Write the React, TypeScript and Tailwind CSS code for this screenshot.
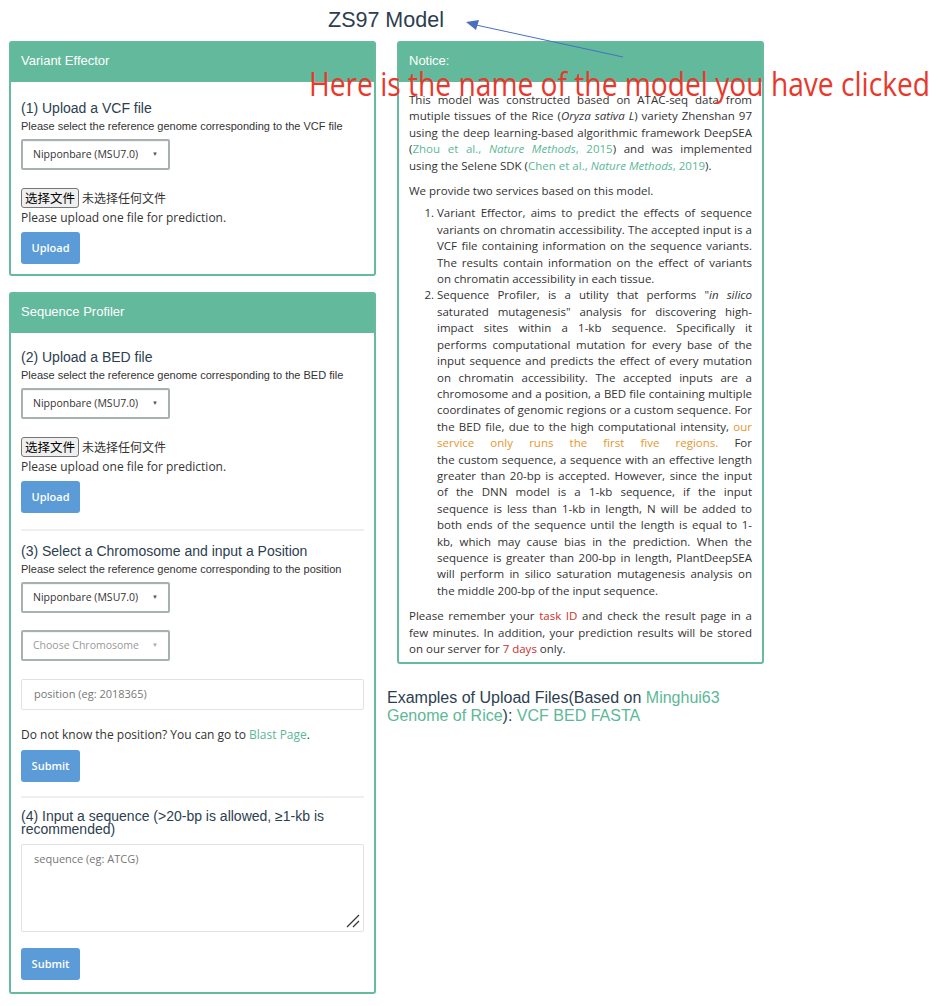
import React from "react";

const sans = "font-['Liberation_Sans',Arial,sans-serif]";
const open = "font-['Open_Sans',sans-serif]";
const cjk = "font-['Noto_Sans_CJK_SC',sans-serif]";

const Panel = ({ title, children, className = "" }: { title: string; children: React.ReactNode; className?: string }) => (
  <div className={`border-2 border-[#66bb9d] rounded-[3px] bg-white ${className}`}>
    <div className={`h-[39px] bg-[#63b99c] px-[10px] pb-[3px] flex items-center text-white text-[13px] ${sans}`}>{title}</div>
    {children}
  </div>
);

const Select = ({ label, muted = false }: { label: string; muted?: boolean }) => (
  <div className="w-[149px] h-[31px] border-2 border-[#a9b0b0] rounded-[2px] bg-white flex items-center justify-between pl-[10px] pr-[10px] shadow-[inset_0_1px_1px_rgba(0,0,0,0.05)]">
    <span className={`text-[10.5px] ${open} ${muted ? "text-[#999]" : "text-[#333]"}`}>{label}</span>
    <span className={`text-[6px] ${muted ? "text-[#aaa]" : "text-[#555]"}`}>▼</span>
  </div>
);

const FileRow = () => (
  <div className="flex items-center h-[20px]">
    <div className={`h-[20px] px-[3px] border border-[#767676] rounded-[3px] bg-[#efefef] flex items-center text-[12.5px] text-black ${cjk}`}>选择文件</div>
    <span className={`ml-[3px] text-[12px] text-[#333] ${cjk}`}>未选择任何文件</span>
  </div>
);

const Btn = ({ label }: { label: string }) => (
  <div className={`w-[59px] h-[32px] rounded-[3px] bg-[#5b9bd7] text-white text-[11px] font-semibold flex items-center justify-center ${open}`}>{label}</div>
);

const Heading = ({ children }: { children: React.ReactNode }) => (
  <div className={`text-[14px] leading-[14px] text-[#2c3e50] ${sans}`}>{children}</div>
);

const Sub = ({ children }: { children: React.ReactNode }) => (
  <div className={`mt-[5px] text-[11px] leading-[13px] text-[#333] ${sans}`}>{children}</div>
);

const Hr = () => <div className="h-[2px] bg-[#eef0f0]" />;

const green = "text-[#5cb896]";
// a full justified line, used where the reference breaks the line differently
const fullLine = "inline-block w-full [text-align-last:justify]";

export default function App() {
  return (
    <div className="relative w-[942px] h-[1006px] bg-white overflow-hidden">
      <div className={`pl-[328px] pt-[7px] h-[41px] text-[21.5px] leading-[26px] text-[#2c3e50] ${sans}`}>ZS97 Model</div>

      <div className="flex">
        {/* left column */}
        <div className="ml-[9px] w-[367px]">
          <Panel title="Variant Effector">
            <div className="px-[10px] pt-[19px] pb-[10px]">
              <Heading>(1) Upload a VCF file</Heading>
              <Sub>Please select the reference genome corresponding to the VCF file</Sub>
              <div className="mt-[6px]"><Select label="Nipponbare (MSU7.0)" /></div>
              <div className="mt-[18px]"><FileRow /></div>
              <div className={`mt-[1px] text-[12px] leading-[17px] text-[#333] ${open}`}>Please upload one file for prediction.</div>
              <div className="mt-[6px]"><Btn label="Upload" /></div>
            </div>
          </Panel>

          <Panel title="Sequence Profiler" className="mt-[16px]">
            <div className="px-[10px] pt-[17px] pb-[12px]">
              <Heading>(2) Upload a BED file</Heading>
              <Sub>Please select the reference genome corresponding to the BED file</Sub>
              <div className="mt-[6px]"><Select label="Nipponbare (MSU7.0)" /></div>
              <div className="mt-[18px]"><FileRow /></div>
              <div className={`mt-[1px] text-[12px] leading-[17px] text-[#333] ${open}`}>Please upload one file for prediction.</div>
              <div className="mt-[6px]"><Btn label="Upload" /></div>
              <div className="mt-[16px]"><Hr /></div>

              <div className="mt-[13px]"><Heading>(3) Select a Chromosome and input a Position</Heading></div>
              <Sub>Please select the reference genome corresponding to the position</Sub>
              <div className="mt-[6px]"><Select label="Nipponbare (MSU7.0)" /></div>
              <div className="mt-[17px]"><Select label="Choose Chromosome" muted /></div>
              <div className={`mt-[18px] h-[31px] border border-[#dfe3e3] rounded-[2px] flex items-center pl-[12px] text-[11px] text-[#777] ${open}`}>position (eg: 2018365)</div>
              <div className={`mt-[16px] text-[12px] leading-[17px] text-[#333] ${open}`}>
                Do not know the position? You can go to <span className={green}>Blast Page</span>.
              </div>
              <div className="mt-[7px]"><Btn label="Submit" /></div>
              <div className="mt-[14px]"><Hr /></div>

              <div className={`mt-[12px] text-[14px] leading-[13px] text-[#2c3e50] ${sans}`}>
                (4) Input a sequence (&gt;20-bp is allowed, ≥1-kb is recommended)
              </div>
              <div className={`relative mt-[8px] h-[88px] border border-[#dfe3e3] rounded-[2px] pl-[12px] pt-[6px] text-[11px] text-[#777] ${open}`}>
                sequence (eg: ATCG)
                <svg className="absolute right-[2px] bottom-[2px]" width="16" height="16" viewBox="0 0 16 16">
                  <path d="M14 2 L2 14 M14 8 L8 14" stroke="#333" strokeWidth="1.2" />
                </svg>
              </div>
              <div className="mt-[16px]"><Btn label="Submit" /></div>
            </div>
          </Panel>
        </div>

        {/* right column */}
        <div className="ml-[11px] w-[377px]">
          <Panel title="Notice:" className="ml-[10px] w-[367px]">
            <div className={`px-[10px] pt-[10px] pb-[5px] text-[11.5px] leading-[16.4px] text-[#333] text-justify ${open}`}>
              <p className="mb-[9px]">
                This model was constructed based on ATAC-seq data from mutiple tissues of the Rice (<i>Oryza sativa L</i>) variety Zhenshan 97 using the deep learning-based algorithmic framework DeepSEA{" "}
                <span className={fullLine}>(<span className={green}>Zhou et al., <i>Nature Methods</i>, 2015</span>) and was implemented</span>{" "}
                using the Selene SDK (<span className={green}>Chen et al., <i>Nature Methods</i>, 2019</span>).
              </p>
              <p className="mb-[6px]">We provide two services based on this model.</p>
              <ol className="list-decimal pl-[28px] mb-[9px]">
                <li>
                  Variant Effector, aims to predict the effects of sequence variants on chromatin accessibility. The accepted input is a VCF file containing information on the sequence variants. The results contain information on the effect of variants on chromatin accessibility in each tissue.
                </li>
                <li>
                  Sequence Profiler, is a utility that performs "<i>in silico</i> saturated mutagenesis" analysis for discovering high-impact sites within a 1-kb sequence. Specifically it performs computational mutation for every base of the input sequence and predicts the effect of every mutation on chromatin accessibility. The accepted inputs are a chromosome and a position, a BED file containing multiple coordinates of genomic regions or a custom sequence. For the BED file, due to the high computational intensity, <span className="text-[#e8962e]">our</span>{" "}
                  <span className={fullLine}><span className="text-[#e8962e]">service only runs the first five regions.</span> For</span>{" "}
                  the custom sequence, a sequence with an effective length greater than 20-bp is accepted. However, since the input of the DNN model is a 1-kb sequence, if the input sequence is less than 1-kb in length, N will be added to{" "}
                  <span className={fullLine}>both ends of the sequence until the length is equal to 1-</span>
                  kb, which may cause bias in the prediction. When the sequence is greater than 200-bp in length, PlantDeepSEA will perform in silico saturation mutagenesis analysis on the middle 200-bp of the input sequence.
                </li>
              </ol>
              <p>
                Please remember your <span className="text-[#c9302c]">task ID</span> and check the result page in a few minutes. In addition, your prediction results will be stored on our server for <span className="text-[#c9302c]">7 days</span> only.
              </p>
            </div>
          </Panel>
          <div className={`mt-[25px] text-[16px] leading-[18px] text-[#2c3e50] ${sans}`}>
            Examples of Upload Files(Based on <span className={green}>Minghui63 Genome of Rice</span>): <span className={green}>VCF</span> <span className={green}>BED</span> <span className={green}>FASTA</span>
          </div>
        </div>
      </div>

      {/* annotation overlay */}
      <svg className="absolute left-0 top-0" width="942" height="110">
        <line x1="623" y1="57" x2="476" y2="25" stroke="#4a6fc0" strokeWidth="1" />
        <polygon points="466,22 479,20 476,30" fill="#4a6fc0" />
      </svg>
      <div className={`absolute left-[309px] top-[64px] whitespace-nowrap text-[32px] leading-[40px] text-[#e8382c] origin-left scale-x-[0.88] ${open}`}>
        Here is the name of the model you have clicked
      </div>
    </div>
  );
}
